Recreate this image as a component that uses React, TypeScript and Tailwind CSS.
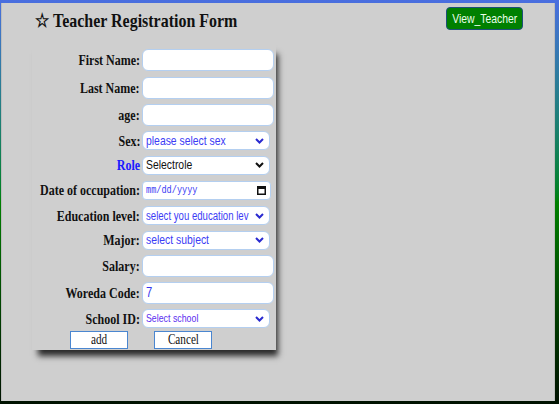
import React from "react";

const serif = { fontFamily: '"Liberation Serif", "Times New Roman", serif' };
const sans = { fontFamily: '"Liberation Sans", Arial, sans-serif' };
const mono = { fontFamily: '"Liberation Mono", "Courier New", monospace' };

// chevron of a select box
const Chevron = ({ color }: { color: string }) => (
  <svg width="9" height="6" viewBox="0 0 9 6" className="mr-[5px] shrink-0">
    <path d="M1 1 L4.5 4.5 L8 1" fill="none" stroke={color} strokeWidth="2" />
  </svg>
);

const CalendarIcon = () => (
  <svg width="9" height="10" viewBox="0 0 9 10" className="mr-[4px] shrink-0">
    <rect x="0.75" y="1.75" width="7.5" height="7.5" fill="none" stroke="#111" strokeWidth="1.5" />
    <rect x="0.75" y="1.5" width="7.5" height="2.5" fill="#111" />
  </svg>
);

const Label = ({ text, blue }: { text: string; blue?: boolean }) => (
  <div className="w-[108px] flex justify-end shrink-0">
    <span
      className={`inline-block origin-right scale-x-[0.8] whitespace-nowrap text-[15px] font-bold leading-[18px] ${
        blue ? "text-[#1a1aff]" : "text-[#111]"
      }`}
      style={serif}
    >
      {text}
    </span>
  </div>
);

const TextBox = ({ value }: { value?: string }) => (
  <div className="w-[132px] h-[22px] bg-white rounded-[6px] border border-[#b4cff0] flex items-center pl-[3px] overflow-hidden">
    {value && (
      <span className="inline-block origin-left scale-x-[0.8] text-[14px] text-[#3535f0]" style={sans}>
        {value}
      </span>
    )}
  </div>
);

const SelectBox = ({
  text,
  color,
  chevron,
  size,
}: {
  text: string;
  color: string;
  chevron: string;
  size: string;
}) => (
  <div className="w-[128px] h-[19px] bg-white rounded-[6px] border border-[#b4cff0] flex items-center pl-[3px]">
    <div className="flex-1 min-w-0 flex items-center">
      <span className={`inline-block origin-left scale-x-[0.8] whitespace-nowrap ${size}`} style={{ ...sans, color }}>
        {text}
      </span>
    </div>
    <Chevron color={chevron} />
  </div>
);

const rows = [
  { label: "First Name:", h: "h-[28px]", field: <TextBox /> },
  { label: "Last Name:", h: "h-[27px]", field: <TextBox /> },
  { label: "age:", h: "h-[27px]", field: <TextBox /> },
  {
    label: "Sex:",
    h: "h-[25px]",
    field: <SelectBox text="please select sex" color="#3c3cf5" chevron="#2a2ad0" size="text-[13px]" />,
  },
  {
    label: "Role",
    blue: true,
    h: "h-[24px]",
    field: <SelectBox text="Selectrole" color="#111" chevron="#111" size="text-[13px]" />,
  },
  {
    label: "Date of occupation:",
    h: "h-[26px]",
    field: (
      <div className="w-[129px] h-[19px] bg-white rounded-[4px] border border-[#b4cff0] flex items-center justify-between pl-[3px]">
        <span className="inline-block origin-left scale-x-[0.78] text-[11px] text-[#3c3cf5]" style={mono}>
          mm/dd/yyyy
        </span>
        <CalendarIcon />
      </div>
    ),
  },
  {
    label: "Education level:",
    h: "h-[25px]",
    field: <SelectBox text="select you education lev" color="#3c3cf5" chevron="#2a2ad0" size="text-[12px]" />,
  },
  {
    label: "Major:",
    h: "h-[24px]",
    field: <SelectBox text="select subject" color="#3c3cf5" chevron="#2a2ad0" size="text-[13px]" />,
  },
  { label: "Salary:", h: "h-[27px]", field: <TextBox /> },
  { label: "Woreda Code:", h: "h-[27px]", field: <TextBox value="7" /> },
  {
    label: "School ID:",
    h: "h-[25px]",
    field: <SelectBox text="Select school" color="#5b2ef0" chevron="#2a2ad0" size="text-[11px]" />,
  },
];

export default function App() {
  return (
    <main className="w-full h-[404px] bg-gradient-to-b from-[#4a6ee0] via-[#008000] to-[#001200] pt-[3px] pl-[1px] pr-[4px] pb-[3px]">
      <div className="h-full bg-[#cfcfcf] border-l border-r border-[#bdbdbd]">
        {/* Header */}
        <div className="h-[41px] flex items-start justify-between pl-[33px] pr-[31px] pt-[4px]">
          <h1
            className="mt-[3px] inline-block origin-left scale-x-[0.84] whitespace-nowrap text-[19px] leading-[22px] font-bold text-[#111]"
            style={serif}
          >
            ☆ Teacher Registration Form
          </h1>
          <button
            className="w-[77px] h-[23px] bg-[#008000] rounded-[4px] border border-[#1d4f7a] flex items-center justify-center"
            style={sans}
          >
            <span className="inline-block scale-x-[0.8] whitespace-nowrap text-[13px] text-[#eaffea]">View_Teacher</span>
          </button>
        </div>

        {/* Form card */}
        <div className="ml-[30px] w-[244px] pt-[2px] pb-[1px] shadow-[4px_8px_6px_-2px_rgba(0,0,0,0.8)]">
          {rows.map((r, i) => (
            <div key={i} className={`flex items-center gap-[2px] ${r.h}`}>
              <Label text={r.label} blue={r.blue} />
              {r.field}
            </div>
          ))}
          <div className="flex h-[18px] pl-[38px] gap-[26px]">
            <button className="w-[58px] h-[18px] bg-white border border-[#4a86d0] flex items-center justify-center">
              <span className="inline-block scale-x-[0.8] text-[14px] leading-[16px] text-[#111]" style={serif}>
                add
              </span>
            </button>
            <button className="w-[58px] h-[18px] bg-white border border-[#4a86d0] flex items-center justify-center">
              <span className="inline-block scale-x-[0.8] text-[14px] leading-[16px] text-[#111]" style={serif}>
                Cancel
              </span>
            </button>
          </div>
        </div>
      </div>
    </main>
  );
}
